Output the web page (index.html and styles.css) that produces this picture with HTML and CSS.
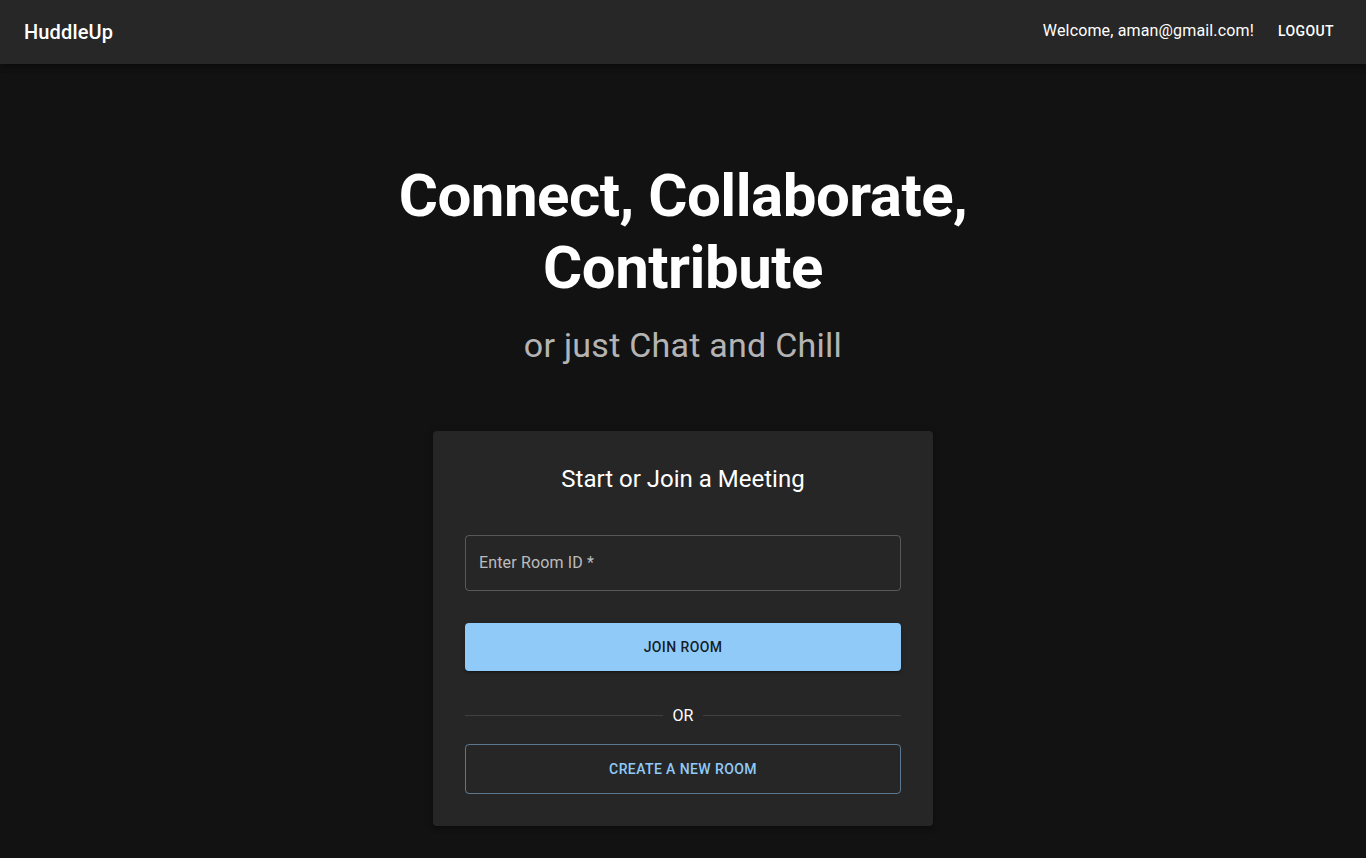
FILE: index.html
```html
<!DOCTYPE html>
<html lang="en">
<head>
<meta charset="utf-8">
<title>HuddleUp</title>
<link rel="stylesheet" href="styles.css">
</head>
<body>
<header class="appbar">
  <div class="brand">HuddleUp</div>
  <div class="user">
    <span class="welcome">Welcome, aman@gmail.com!</span>
    <button class="logout">Logout</button>
  </div>
</header>
<main class="main">
  <h1 class="hero">Connect, Collaborate,<br>Contribute</h1>
  <p class="sub">or just Chat and Chill</p>
  <section class="card">
    <h2 class="card-title">Start or Join a Meeting</h2>
    <div class="field">
      <span class="label">Enter Room ID *</span>
    </div>
    <button class="btn-join">Join Room</button>
    <div class="divider"><span class="line"></span><span class="or">OR</span><span class="line"></span></div>
    <button class="btn-create">Create a New Room</button>
  </section>
</main>
</body>
</html>
```
FILE: styles.css
```css
* { box-sizing: border-box; }
html, body { margin: 0; padding: 0; }
body {
  background: #121212;
  color: #fff;
  font-family: Roboto, "Liberation Sans", sans-serif;
  min-height: 858px;
}
.appbar {
  height: 64px;
  background: #272727;
  display: flex;
  align-items: center;
  justify-content: space-between;
  padding: 0 24px;
  box-shadow: 0 2px 4px -1px rgba(0,0,0,.2), 0 4px 5px 0 rgba(0,0,0,.14), 0 1px 10px 0 rgba(0,0,0,.12);
}
.brand {
  font-size: 20px;
  font-weight: 500;
  letter-spacing: 0.0075em;
  line-height: 1.6;
}
.user { display: flex; align-items: center; gap: 16px; margin-top: -2px; }
.welcome { font-size: 16px; line-height: 1.5; letter-spacing: 0.00938em; }
.logout {
  background: none;
  border: none;
  color: #fff;
  font-family: inherit;
  font-size: 14px;
  font-weight: 500;
  text-transform: uppercase;
  letter-spacing: 0.02857em;
  padding: 6px 8px;
  line-height: 1.75;
}
.main {
  display: flex;
  flex-direction: column;
  align-items: center;
  padding-top: 96px;
}
.hero {
  margin: 0 0 21px;
  font-size: 60px;
  font-weight: 700;
  line-height: 1.2;
  letter-spacing: -0.00833em;
  text-align: center;
}
.sub {
  margin: 0 0 64px;
  font-size: 34px;
  line-height: 1.235;
  letter-spacing: 0.00735em;
  color: rgba(255,255,255,0.7);
}
.card {
  width: 500px;
  background: #262626;
  border-radius: 4px;
  padding: 32px;
  display: flex;
  flex-direction: column;
  box-shadow: 0 3px 3px -2px rgba(0,0,0,.2), 0 3px 4px 0 rgba(0,0,0,.14), 0 1px 8px 0 rgba(0,0,0,.12);
}
.card-title {
  margin: 0 0 40px;
  font-size: 24px;
  font-weight: 400;
  line-height: 1.334;
  text-align: center;
}
.field {
  height: 56px;
  border: 1px solid rgba(255,255,255,0.23);
  border-radius: 4px;
  display: flex;
  align-items: center;
  padding: 0 13px 2px;
}
.label {
  font-size: 16px;
  color: rgba(255,255,255,0.7);
  letter-spacing: 0.00938em;
}
.btn-join {
  margin-top: 32px;
  height: 48px;
  border: none;
  border-radius: 4px;
  background: #90caf9;
  color: rgba(0,0,0,0.87);
  font-family: inherit;
  font-size: 14px;
  font-weight: 500;
  letter-spacing: 0.02857em;
  text-transform: uppercase;
  padding: 0;
  box-shadow: 0 3px 1px -2px rgba(0,0,0,.2), 0 2px 2px 0 rgba(0,0,0,.14), 0 1px 5px 0 rgba(0,0,0,.12);
}
.divider {
  margin: 32px 0 17px;
  display: flex;
  align-items: center;
  height: 24px;
}
.line { flex: 1; height: 1px; background: rgba(255,255,255,0.12); }
.or { padding: 2px 9.6px 0; font-size: 16px; line-height: 1.5; }
.btn-create {
  height: 50px;
  background: transparent;
  border: 1px solid rgba(144,202,249,0.5);
  border-radius: 4px;
  color: #90caf9;
  font-family: inherit;
  font-size: 14px;
  font-weight: 500;
  letter-spacing: 0.02857em;
  text-transform: uppercase;
}
```
